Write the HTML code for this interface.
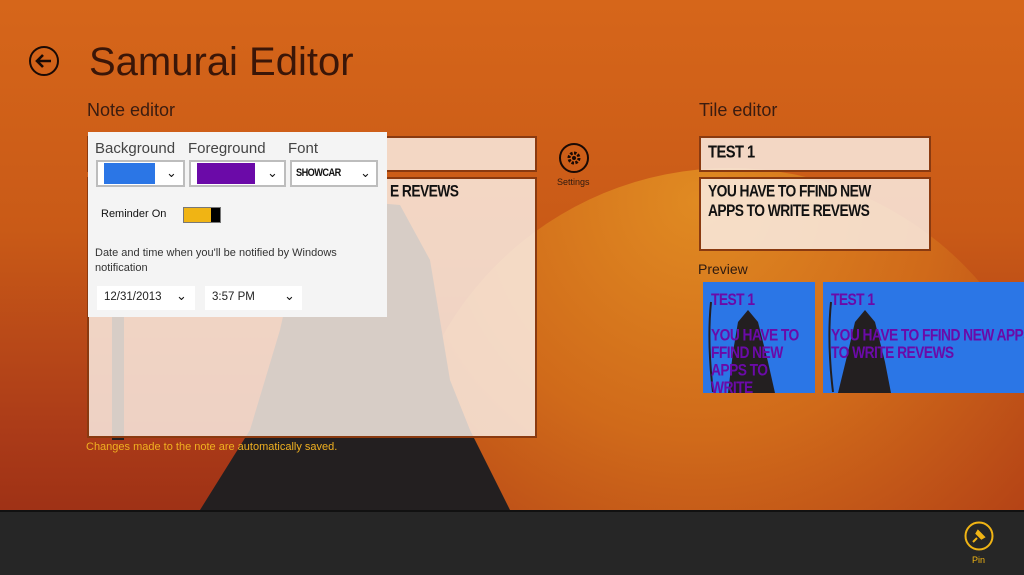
<!DOCTYPE html>
<html><head><meta charset="utf-8"><style>
*{margin:0;padding:0;box-sizing:border-box}
html,body{width:1024px;height:575px;overflow:hidden}
body{font-family:"Liberation Sans",sans-serif}
#w{position:relative;width:1024px;height:575px;overflow:hidden;background:linear-gradient(180deg,#d6661a 0%,#c95a17 40%,#ab3b18 75%,#952a14 100%)}
.abs{position:absolute}
.bold{font-family:"Liberation Sans",sans-serif;font-weight:900;letter-spacing:-0.6px;transform:scale(0.92,1.1);transform-origin:left top;white-space:nowrap}
.box{background:rgba(250,238,230,0.84);border:2px solid #8a3a10}
.sel{position:absolute;top:160px;height:27px;background:#fff;border:2px solid #bdbdbd}
.chev{position:absolute;font-size:13px;color:#111}
</style></head><body><div id="w">
<svg class="abs" style="left:0;top:0" width="1024" height="575">
<defs><radialGradient id="g" cx="0.45" cy="0.05" r="0.9"><stop offset="0" stop-color="#e08a22"/><stop offset="0.4" stop-color="#d06a1a"/><stop offset="0.75" stop-color="#b54416"/><stop offset="1" stop-color="#a03516"/></radialGradient></defs>
<circle cx="730" cy="498" r="330" fill="url(#g)"/>
<path d="M200 510 L250 430 L280 330 L300 240 L340 200 L400 205 L430 260 L450 380 L470 430 L490 470 L510 510 Z" fill="#231f20"/>
<rect x="112" y="300" width="12" height="140" fill="#231f20"/>
</svg>
<svg class="abs" style="left:28px;top:45px" width="32" height="32"><circle cx="16" cy="16" r="14" fill="none" stroke="#1a0a05" stroke-width="2"/><path d="M23 16H9M15 10L9 16L15 22" fill="none" stroke="#1a0a05" stroke-width="2.6"/></svg>
<div class="abs" style="left:89px;top:40px;font-size:40px;color:#3a1608">Samurai Editor</div>
<div class="abs" style="left:87px;top:100px;font-size:18px;color:#3a1c10">Note editor</div>
<div class="abs" style="left:699px;top:100px;font-size:18px;color:#3a1c10">Tile editor</div>
<div class="abs box" style="left:87px;top:136px;width:450px;height:36px"></div>
<div class="abs box" style="left:87px;top:177px;width:450px;height:261px"></div>
<div class="abs bold" style="left:390px;top:182px;font-size:15px;color:#111">E REVEWS</div>
<div class="abs" style="left:86px;top:441px;font-size:11px;color:#f0b020">Changes made to the note are automatically saved.</div>
<svg class="abs" style="left:558px;top:142px" width="32" height="32"><circle cx="16" cy="16" r="14" fill="none" stroke="#1a0a05" stroke-width="2"/><circle cx="16" cy="16" r="5" fill="none" stroke="#1a0a05" stroke-width="3" stroke-dasharray="2.5 1.4"/><circle cx="16" cy="16" r="2" fill="#1a0a05"/></svg>
<div class="abs" style="left:557px;top:177px;font-size:9px;color:#2e1a10">Settings</div>
<div class="abs box" style="left:699px;top:136px;width:232px;height:36px"></div>
<div class="abs bold" style="left:708px;top:143px;font-size:16px;color:#111">TEST 1</div>
<div class="abs box" style="left:699px;top:177px;width:232px;height:74px"></div>
<div class="abs bold" style="left:708px;top:182px;font-size:15px;line-height:18px;color:#111">YOU HAVE TO FFIND NEW<br>APPS TO WRITE REVEWS</div>
<div class="abs" style="left:698px;top:261px;font-size:14px;color:#2e1a10">Preview</div>
<div class="abs" style="left:703px;top:282px;width:112px;height:111px;background:#2b76e6;overflow:hidden">
<svg class="abs" style="left:0;top:0" width="112" height="111"><path d="M8 20 Q4 60 10 110" stroke="#231f20" stroke-width="2" fill="none"/><path d="M25 111 L30 70 L35 40 L45 28 L55 40 L65 80 L72 111Z" fill="#231f20"/></svg>
<div class="abs bold" style="left:8px;top:10px;font-size:15px;line-height:16px;color:#6b0aa8">TEST 1<br><br>YOU HAVE TO<br>FFIND NEW<br>APPS TO<br>WRITE</div></div>
<div class="abs" style="left:823px;top:282px;width:201px;height:111px;background:#2b76e6;overflow:hidden">
<svg class="abs" style="left:0;top:0" width="201" height="111"><path d="M8 20 Q4 60 10 110" stroke="#231f20" stroke-width="2" fill="none"/><path d="M15 111 L25 70 L32 40 L42 28 L52 40 L62 80 L68 111Z" fill="#231f20"/></svg>
<div class="abs bold" style="left:8px;top:10px;font-size:15px;line-height:16px;color:#6b0aa8">TEST 1<br><br>YOU HAVE TO FFIND NEW APPS<br>TO WRITE REVEWS</div></div>
<div class="abs" style="left:88px;top:132px;width:299px;height:185px;background:#f4f4f4"></div>
<div class="abs" style="left:95px;top:140px;font-size:15px;color:#444">Background</div>
<div class="abs" style="left:188px;top:140px;font-size:15px;color:#444">Foreground</div>
<div class="abs" style="left:288px;top:140px;font-size:15px;color:#444">Font</div>
<div class="sel" style="left:96px;width:89px"><div class="abs" style="left:6px;top:1px;width:51px;height:21px;background:#2b76e6"></div><div class="chev" style="left:68px;top:3px">&#8964;</div></div>
<div class="sel" style="left:189px;width:97px"><div class="abs" style="left:6px;top:1px;width:58px;height:21px;background:#6b0aa8"></div><div class="chev" style="left:76px;top:3px">&#8964;</div></div>
<div class="sel" style="left:290px;width:88px"><div class="abs bold" style="left:4px;top:5px;font-size:10px;color:#111">SHOWCAR</div><div class="chev" style="left:68px;top:3px">&#8964;</div></div>
<div class="abs" style="left:101px;top:208px;font-size:11px;color:#111">Reminder On</div>
<div class="abs" style="left:183px;top:207px;width:38px;height:16px;border:1px solid #777;background:#f0b414"><div class="abs" style="right:0;top:0;width:9px;height:14px;background:#000"></div></div>
<div class="abs" style="left:95px;top:246px;font-size:11px;line-height:15px;color:#333">Date and time when you'll be notified by Windows<br>notification</div>
<div class="abs" style="left:97px;top:286px;width:98px;height:24px;background:#fff"><span class="abs" style="left:7px;top:5px;font-size:11.5px;color:#222">12/31/2013</span><span class="chev" style="left:79px;top:2px">&#8964;</span></div>
<div class="abs" style="left:205px;top:286px;width:97px;height:24px;background:#fff"><span class="abs" style="left:7px;top:5px;font-size:11.5px;color:#222">3:57 PM</span><span class="chev" style="left:79px;top:2px">&#8964;</span></div>
<div class="abs" style="left:0;top:510px;width:1024px;height:65px;background:#262626;border-top:2px solid #111"></div>
<svg class="abs" style="left:964px;top:521px" width="30" height="30"><circle cx="15" cy="15" r="13.5" fill="none" stroke="#f0b414" stroke-width="2"/><path d="M9 21L13 17M12 12L18 18M14 10L20 16L17.5 17.5L12.5 12.5Z" stroke="#f0b414" stroke-width="2" fill="#f0b414"/></svg>
<div class="abs" style="left:972px;top:555px;font-size:9px;color:#f0b414">Pin</div>
</div></body></html>
